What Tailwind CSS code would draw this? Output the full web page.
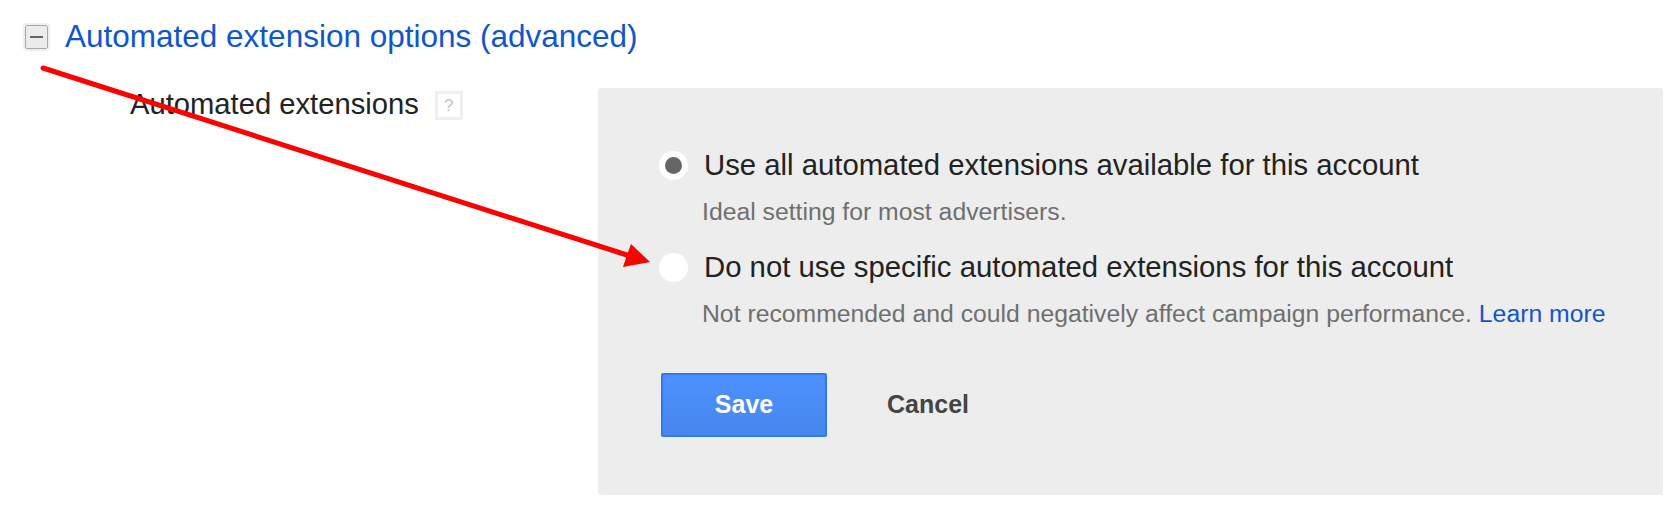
<!DOCTYPE html>
<html lang="en">
<head>
    <meta charset="UTF-8">
    <title>Automated extension options</title>
    <script src="https://cdn.jsdelivr.net/npm/@tailwindcss/browser@4"></script>
</head>
<body class="bg-white font-['Liberation_Sans',Arial,sans-serif] overflow-hidden">
    <div class="relative w-[1673px] h-[507px]">
        <div class="flex items-center pl-[25px] pt-[18px] h-[55px]">
            <span class="flex items-center justify-center w-[23px] h-[24px] bg-[#ececec] border border-[#a8a8a8] rounded-[2px] outline-2 outline-[#eeeeee]">
                <span class="w-[13px] h-[2px] bg-[#666666]"></span>
            </span>
            <a class="ml-[17px] -mt-[2px] text-[31.5px] leading-[36px] text-[#1155cc]">Automated extension options (advanced)</a>
        </div>

        <div class="flex mt-[33px]">
            <div class="w-[598px] shrink-0 flex items-start pl-[130px]">
                <span class="text-[29.2px] leading-[32px] text-[#222222]">Automated extensions</span>
                <span class="ml-[16px] mt-[3px] flex items-center justify-center w-[28px] h-[29px] border-[3px] border-[#efefef] text-[17px] leading-none text-[#c4c4c4]">?</span>
            </div>

            <div class="w-[1065px] h-[407px] bg-[#ededed] rounded-[3px] pl-[61px] pt-[60px]">
                <div class="flex items-center h-[35px]">
                    <span class="flex items-center justify-center w-[29px] h-[29px] rounded-full bg-white">
                        <span class="w-[17px] h-[17px] rounded-full bg-[#666666]"></span>
                    </span>
                    <span class="ml-[16px] -mt-[2px] text-[29.3px] leading-[34px] text-[#222222]">Use all automated extensions available for this account</span>
                </div>
                <p class="ml-[43px] mt-[14px] text-[24.75px] leading-[30px] text-[#6f6f6f]">Ideal setting for most advertisers.</p>

                <div class="flex items-center h-[35px] mt-[23px]">
                    <span class="w-[29px] h-[29px] rounded-full bg-white"></span>
                    <span class="ml-[16px] -mt-[2px] text-[29.3px] leading-[34px] text-[#222222]">Do not use specific automated extensions for this account</span>
                </div>
                <p class="ml-[43px] mt-[14px] text-[24.75px] leading-[30px] text-[#6f6f6f]">Not recommended and could negatively affect campaign performance. <a class="text-[#1155cc]">Learn more</a></p>

                <div class="flex items-center ml-[2px] mt-[44px]">
                    <button class="w-[166px] h-[64px] bg-gradient-to-b from-[#4d90fe] to-[#4787ed] border-2 border-[#3079ed] rounded-[2px] text-[25px] font-bold text-white">Save</button>
                    <button class="ml-[60px] text-[25px] font-bold text-[#444444]">Cancel</button>
                </div>
            </div>
        </div>

        <svg class="absolute left-0 top-0 pointer-events-none" width="1673" height="507" viewBox="0 0 1673 507">
            <path d="M43 68 L630 256" stroke="#fe0000" stroke-width="5" stroke-linecap="round" fill="none"/>
            <polygon points="650,262 631,244 627,255 623,267" fill="#fe0000"/>
        </svg>
    </div>
</body>
</html>
